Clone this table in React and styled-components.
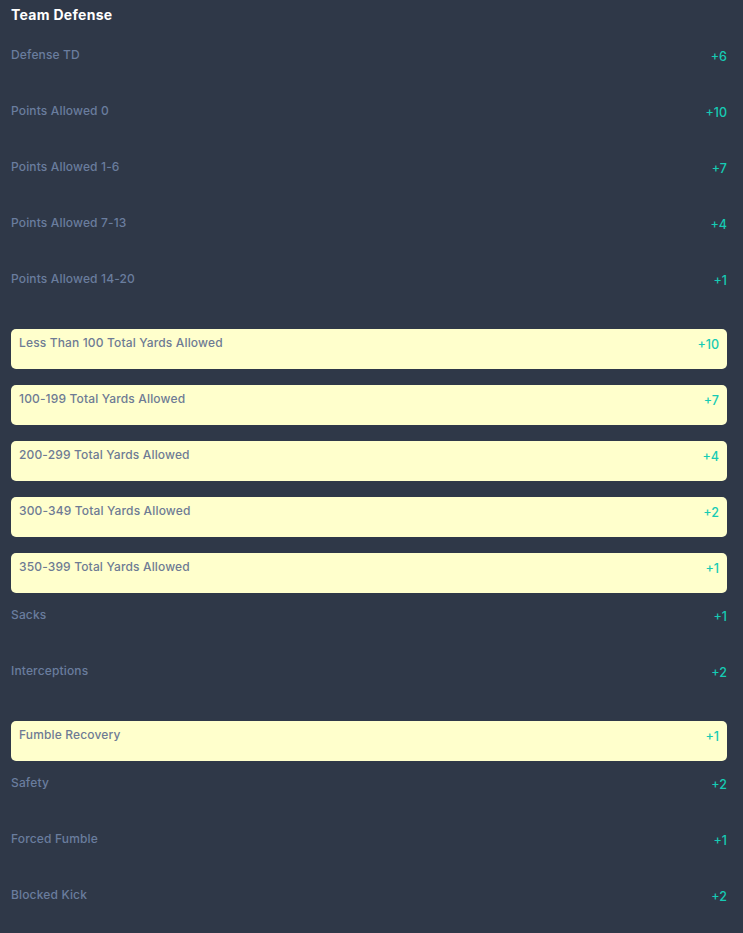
import React from 'react';
import styled, { createGlobalStyle } from 'styled-components';

const GlobalStyle = createGlobalStyle`
  html, body {
    margin: 0;
    padding: 0;
    background: #2f3848;
  }
  body {
    font-family: Inter, "Noto Sans", sans-serif;
  }
`;

const Page = styled.div`
  padding: 5px 16px 20px 11px;
  min-height: 100vh;
  box-sizing: border-box;
  background: #2f3848;
`;

const Title = styled.h2`
  margin: 0 0 16px;
  font-size: 14px;
  line-height: 20px;
  font-weight: 700;
  color: #ffffff;
  letter-spacing: 0.3px;
`;

const List = styled.div`
  display: flex;
  flex-direction: column;
`;

//plain rows take 56px, highlighted ones are yellow boxes with side padding
const Row = styled.div`
  display: flex;
  justify-content: space-between;
  align-items: flex-start;
  box-sizing: border-box;
  height: ${(p) => (p.$hl ? '40px' : '56px')};
  padding: ${(p) => (p.$hl ? '5px 8px 0' : '5px 0 0')};
  margin: ${(p) => (p.$hl ? '8px 0' : '0')};
  background: ${(p) => (p.$hl ? '#ffffcc' : 'transparent')};
  border-radius: ${(p) => (p.$hl ? '5px' : '0')};
`;

const Label = styled.span`
  font-size: 12px;
  line-height: 18px;
  font-weight: 500;
  letter-spacing: 0.15px;
  color: ${(p) => (p.$hl ? '#6e7b94' : '#6a7d9e')};
`;

const Value = styled.span`
  margin-top: 2px;
  font-size: 12.5px;
  line-height: 18px;
  font-weight: 500;
  color: #16cbb4;
`;

const rules = [
  ['Defense TD', '+6'],
  ['Points Allowed 0', '+10'],
  ['Points Allowed 1-6', '+7'],
  ['Points Allowed 7-13', '+4'],
  ['Points Allowed 14-20', '+1'],
  ['Less Than 100 Total Yards Allowed', '+10', true],
  ['100-199 Total Yards Allowed', '+7', true],
  ['200-299 Total Yards Allowed', '+4', true],
  ['300-349 Total Yards Allowed', '+2', true],
  ['350-399 Total Yards Allowed', '+1', true],
  ['Sacks', '+1'],
  ['Interceptions', '+2'],
  ['Fumble Recovery', '+1', true],
  ['Safety', '+2'],
  ['Forced Fumble', '+1'],
  ['Blocked Kick', '+2'],
];

const App = () => (
  <Page>
    <GlobalStyle />
    <Title>Team Defense</Title>
    <List>
      {rules.map(([label, pts, hl]) => (
        <Row key={label} $hl={hl}>
          <Label $hl={hl}>{label}</Label>
          <Value>{pts}</Value>
        </Row>
      ))}
    </List>
  </Page>
);

export default App;
